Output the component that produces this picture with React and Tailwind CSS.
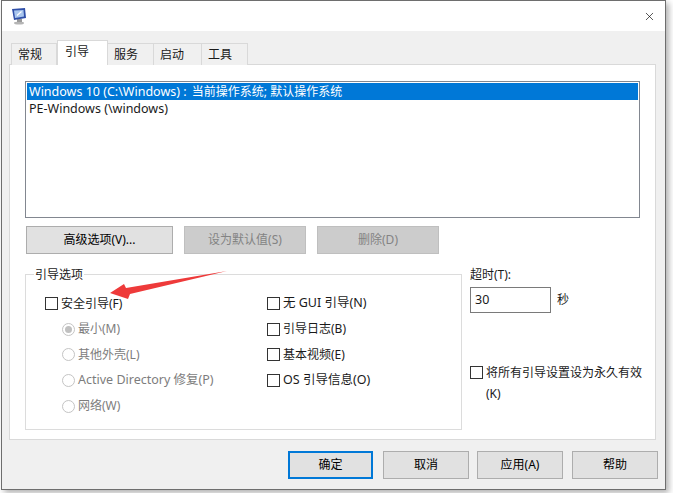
import { X } from 'lucide-react';

const TABS = [
  { label: '常规', w: 'w-[46px]' },
  { label: '引导', w: 'w-[51px]', active: true },
  { label: '服务', w: 'w-[46px]' },
  { label: '启动', w: 'w-[48px]' },
  { label: '工具', w: 'w-[46px]' },
];

const LEFT_OPTS = [
  { label: '最小(M)', checked: true },
  { label: '其他外壳(L)' },
  { label: 'Active Directory 修复(P)', wide: true },
  { label: '网络(W)' },
];

const RIGHT_OPTS = [
  { label: '无 GUI 引导(N)', wide: true },
  { label: '引导日志(B)' },
  { label: '基本视频(E)' },
  { label: 'OS 引导信息(O)', wide: true },
];

function Check() {
  return <span className="w-[13px] h-[13px] border border-[#333] bg-white shrink-0" />;
}

function Radio({ checked }) {
  return (
    <span className="w-[13px] h-[13px] rounded-full border border-[#c4c4c4] bg-white shrink-0 flex items-center justify-center">
      {checked && <span className="w-[7px] h-[7px] rounded-full bg-[#c0c0c0]" />}
    </span>
  );
}

function Btn({ children, w, disabled, primary }) {
  let cls = 'border border-[#adadad] bg-[#e1e1e1] text-black';
  if (disabled) cls = 'border border-[#bfbfbf] bg-[#cccccc] text-[#838383]';
  if (primary) cls = 'border-2 border-[#0078d7] bg-[#e1e1e1] text-black';
  return <div className={`h-[28px] flex items-center justify-center ${w} ${cls}`}>{children}</div>;
}

export default function App() {
  return (
    <div className="relative w-[673px] h-[493px] overflow-hidden bg-white text-[12px] text-[#1a1a1a] font-['Noto_Sans','Noto_Sans_CJK_SC',sans-serif]">
      <div className="ml-px w-[665px] h-[490px] border border-[#6e6e6e] bg-[#f0f0f0] shadow-[3px_3px_6px_rgba(0,0,0,0.3)]">
        {/* title bar */}
        <div className="h-[30px] bg-white flex items-center justify-between pl-[9px] pr-[9px]">
          <svg width="16" height="18" viewBox="0 0 16 18">
            <ellipse cx="8" cy="16" rx="5" ry="1.5" fill="#b5b5b5" />
            <rect x="6" y="12" width="5" height="3" fill="#9a9a9a" />
            <path d="M1 2 L14 1 L15 11 L3 13 Z" fill="#2f4fa8" />
            <path d="M3 3.5 L12.5 3 L13 9.5 L4 11 Z" fill="#a9c6ee" />
            <path d="M6 8.5 L10.5 4.5" stroke="#ffffff" strokeWidth="1.2" />
          </svg>
          <X size={13} strokeWidth={1.2} className="text-black" />
        </div>

        {/* tabs */}
        <div className="flex items-end ml-[9px] mt-[9px] h-[25px] relative z-10">
          {TABS.map((t) => (
            <div
              key={t.label}
              className={`${t.w} flex items-center border-[#d9d9d9] ${
                t.active ? 'h-[25px] bg-white border border-b-0 pb-[3px] pl-[7px]' : 'h-[22px] pl-[6px] bg-[#f0f0f0] border-t border-r first:border-l'
              }`}
            >
              {t.label}
            </div>
          ))}
        </div>

        {/* tab page */}
        <div className="-mt-px ml-[7px] w-[647px] h-[376px] bg-white border border-[#d9d9d9] pl-[15px] pt-[16px]">
          <div className="w-[615px] h-[137px] border border-[#828790] p-px">
            <div className="h-[17px] leading-[17px] bg-[#0078d7] text-white pl-[2px] text-[12.5px]">
              Windows 10 (C:\Windows) : <span className="text-[12px] ml-[2px]">当前操作系统; 默认操作系统</span>
            </div>
            <div className="h-[18px] leading-[18px] pl-[2px] text-[12.5px]">PE-Windows (\windows)</div>
          </div>

          <div className="flex ml-px mt-[8px] gap-[11px]">
            <Btn w="w-[147px]">高级选项(V)...</Btn>
            <Btn w="w-[122px]" disabled>设为默认值(S)</Btn>
            <Btn w="w-[122px]" disabled>删除(D)</Btn>
          </div>

          <div className="flex mt-[12px] gap-[8px]">
            <fieldset className="w-[437px] h-[164px] border border-[#dcdcdc]">
              <legend className="ml-[8px] px-px h-[17px] leading-[17px]">引导选项</legend>
              <div className="flex pl-[19px] pt-[8px]">
                <div className="w-[222px]">
                  <div className="h-[25.6px] flex items-center gap-[3px]">
                    <Check />
                    <span>安全引导(F)</span>
                  </div>
                  {LEFT_OPTS.map((o) => (
                    <div key={o.label} className="h-[25.6px] flex items-center gap-[3px] pl-[17px] text-[#7d7d7d]">
                      <Radio checked={o.checked} />
                      <span className={o.wide ? 'text-[12.5px]' : ''}>{o.label}</span>
                    </div>
                  ))}
                </div>
                <div>
                  {RIGHT_OPTS.map((o) => (
                    <div key={o.label} className="h-[25.6px] flex items-center gap-[3px]">
                      <Check />
                      <span className={o.wide ? 'text-[12.5px]' : ''}>{o.label}</span>
                    </div>
                  ))}
                </div>
              </div>
            </fieldset>

            <div className="w-[180px]">
              <div className="h-[17px] leading-[17px]">超时(T):</div>
              <div className="flex items-center gap-[6px] mt-[4px]">
                <div className="w-[81px] h-[26px] border border-[#7a7a7a] pl-[4px] leading-[24px] text-[12.5px]">30</div>
                <span>秒</span>
              </div>
              <div className="flex items-start gap-[3px] mt-[51px]">
                <span className="mt-[2px] flex"><Check /></span>
                <span className="w-[165px] leading-[21px] -mt-[2px]">将所有引导设置设为永久有效(K)</span>
              </div>
            </div>
          </div>
        </div>

        {/* footer buttons */}
        <div className="flex mt-[11px] ml-[286px]">
          <Btn w="w-[85px]" primary>确定</Btn>
          <div className="ml-[10px]"><Btn w="w-[86px]">取消</Btn></div>
          <div className="ml-[8px]"><Btn w="w-[86px]">应用(A)</Btn></div>
          <div className="ml-[9px]"><Btn w="w-[86px]">帮助</Btn></div>
        </div>
      </div>

      {/* red annotation arrow */}
      <svg className="absolute left-0 top-0 pointer-events-none" width="673" height="493" viewBox="0 0 673 493">
        <polygon points="110,293 124,284 126,288 227,271 130,294 128,299" fill="#ee3a3a" />
      </svg>
    </div>
  );
}
